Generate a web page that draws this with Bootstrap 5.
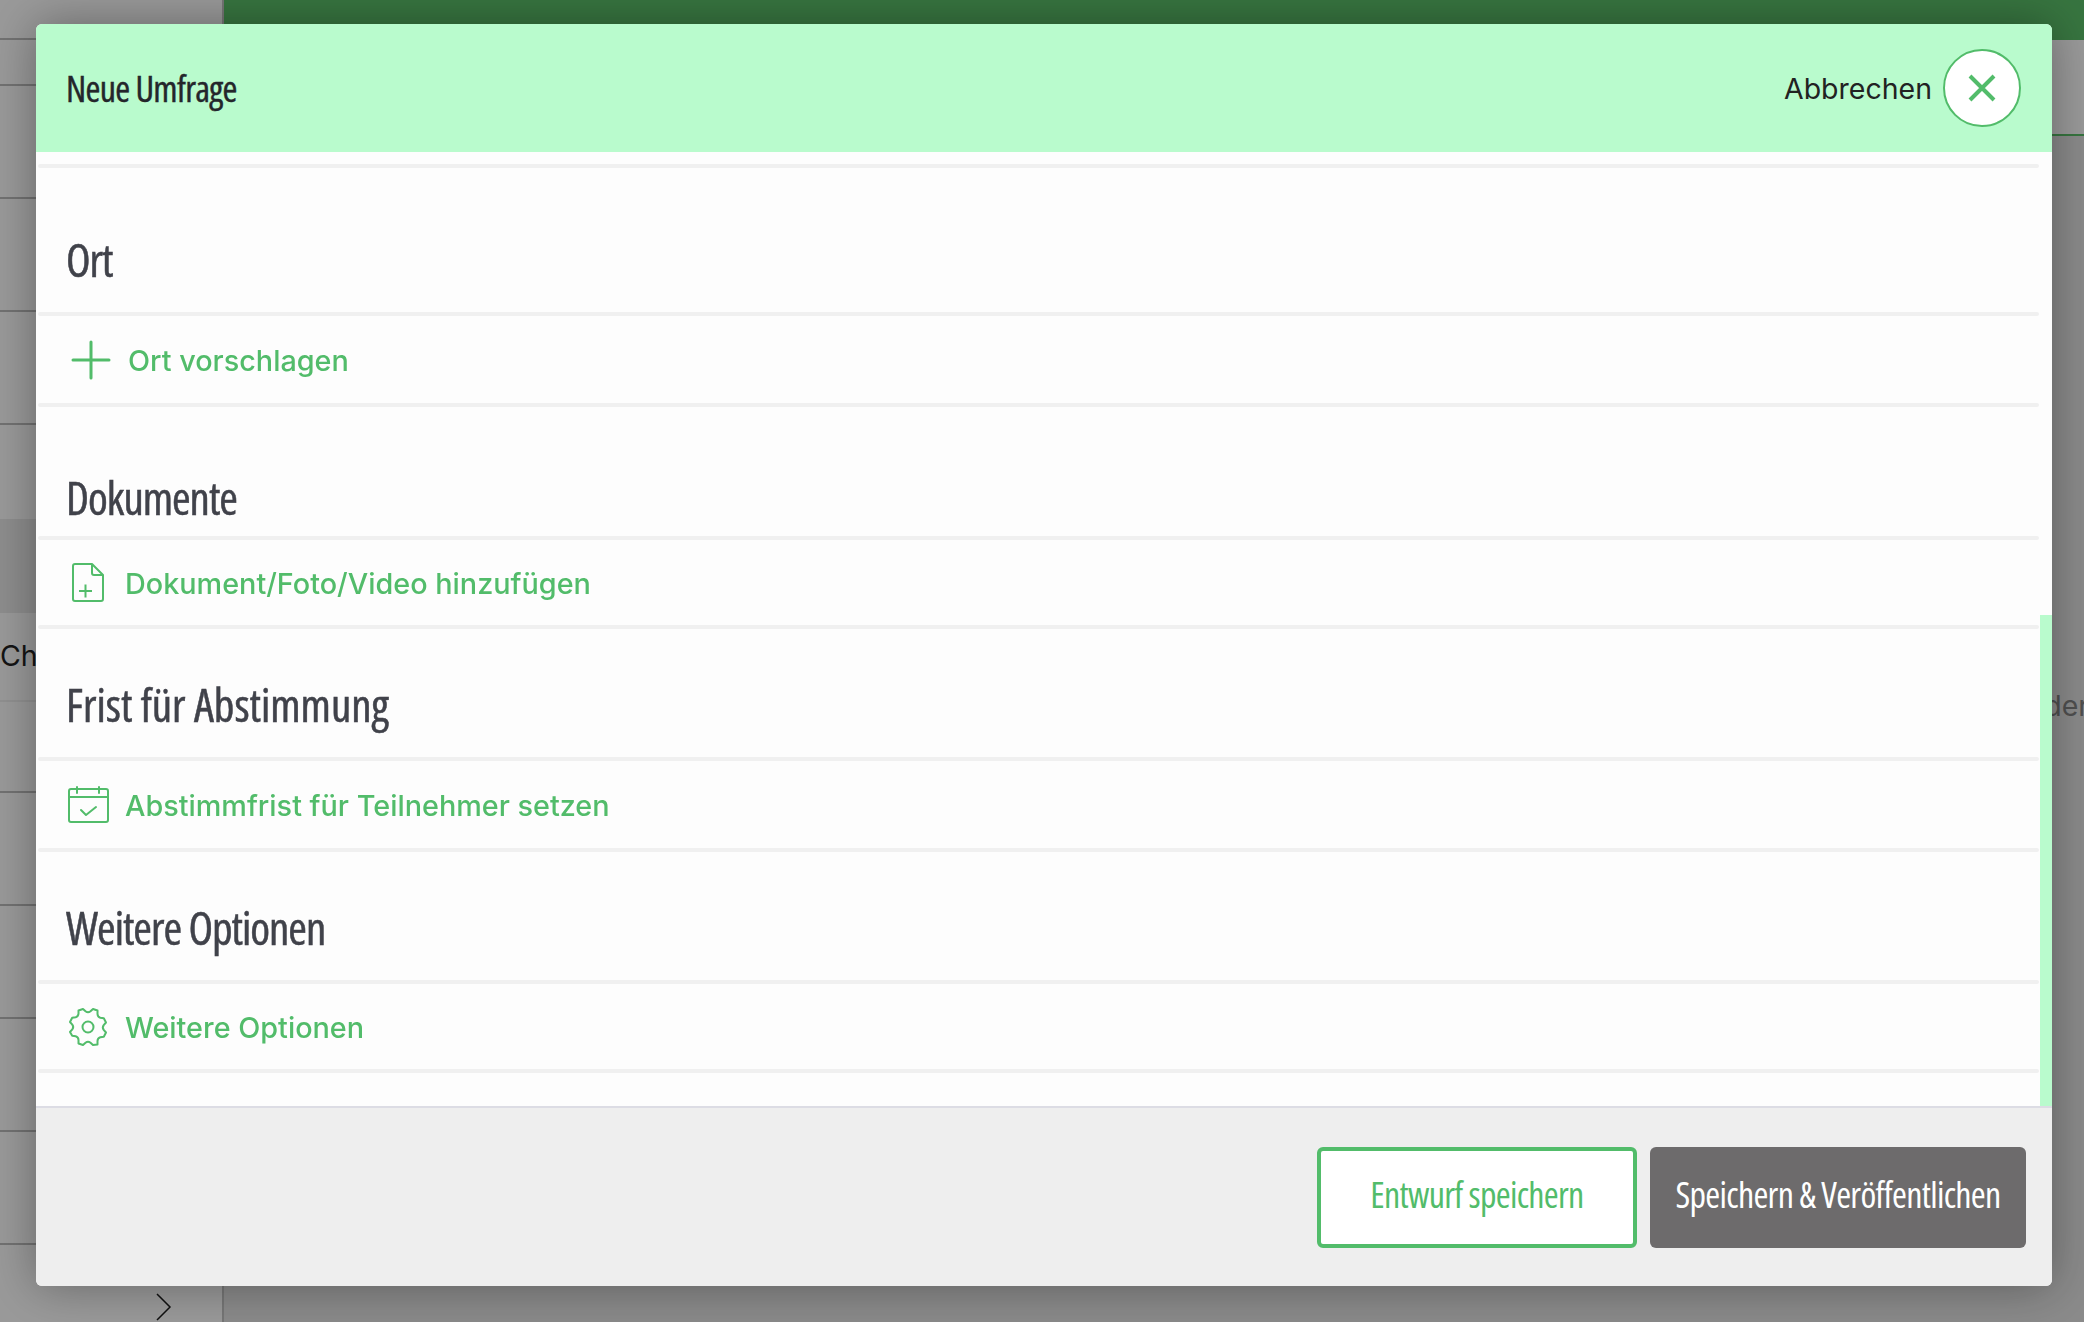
<!DOCTYPE html>
<html lang="de">
<head>
<meta charset="utf-8">
<title>Neue Umfrage</title>
<link href="https://cdn.jsdelivr.net/npm/bootstrap@5.3.0/dist/css/bootstrap.min.css" rel="stylesheet">
<style>
html,body{height:100%;overflow:hidden;}
body{font-family:"Inter","Liberation Sans",sans-serif;font-size:28.5px;color:#222;background:#fff;}
.page-shell{height:1322px;}
.side-col{width:224px;border-right:2px solid #c4c4c4;background:#fff;flex:none;}
.side-row{border-bottom:2px solid #bdbdbd;height:113px;flex:none;white-space:nowrap;overflow:hidden;}
.side-row.r-top{height:40px;}
.side-row.r-a{height:46px;}
.side-row.r-gap{height:94px;border-bottom:0;}
.side-row.r-band{height:94px;background:#eaeaea;border-bottom:0;}
.side-row.r-ch{height:89px;padding-top:26px;border-bottom:2px solid #f0f0f0;line-height:34px;}
.side-row.r-b{height:91px;}
.side-end{flex:1;padding-left:156px;padding-top:48px;}
.main-col{flex:1;overflow:hidden;background:#e6e6e6;}
.main-top{height:40px;background:#5cc26a;}
.main-sub{height:96px;background:#fff;border-bottom:2px solid #5cc26a;}
.main-text{height:570px;padding-top:553px;line-height:34px;margin-right:-5px;white-space:nowrap;color:#848484;}
.scrim{position:fixed;inset:0;background:rgba(0,0,0,.4);padding:24px 32px 36px 36px;}
.sheet{height:100%;border:0;border-radius:6px;overflow:hidden;box-shadow:0 0 48px rgba(0,0,0,.35);background:#fdfdfd;}
.sheet-head{height:128px;background:#b9fbcd;padding:0 31px 0 30px;border:0;border-radius:0;flex:none;}
.narrow{font-family:"Open Sans","Liberation Sans",sans-serif;font-stretch:75%;}
.sheet-title{font-size:36px;font-weight:500;letter-spacing:-.7px;color:#24262b;line-height:1;margin:0;padding-top:1px;-webkit-text-stroke:.4px #24262b;}
.cancel-label{padding-top:3px;}
.close-circle{width:78px;height:78px;border:2px solid #52bc6a;border-radius:50%;background:#fff;margin-left:11px;padding:0;}
.sheet-body{position:relative;background:#fdfdfd;overflow:hidden;padding:12px 13px 0 2px;flex:1;}
.rule-line{height:4px;background:#f0f0f0;border-radius:3px;flex:none;}
.sec-head{padding-left:28px;color:#40424a;font-size:45px;line-height:1;margin:0;height:128px;padding-bottom:30px;font-weight:500;letter-spacing:-1px;-webkit-text-stroke:.5px #40424a;}
.sec-head.h-first{height:144px;}
.sec-head.h-tight{height:129px;padding-bottom:16px;}
.sec-head.h-loose{letter-spacing:0;}
.act-row{height:85px;color:#52bc6a;font-weight:500;font-size:28.8px;padding-left:30px;text-decoration:none;}
.act-row.tall{height:87px;}
.act-row:hover{color:#52bc6a;}
.act-label{padding-top:3px;}
.ico-wrap{width:57px;flex:none;}
.ico-wrap.w-plus{padding-left:3px;width:60px;}
.ico-wrap.w-doc{padding-left:4px;}
.sbar{position:absolute;right:0;top:463px;bottom:0;width:12px;background:#b9fbcd;}
.sheet-foot{height:180px;background:#eeeeee;border-top:2px solid #dcdce4;border-radius:0;padding:39px 26px 0 0;gap:13px;flex:none;align-items:flex-start;justify-content:flex-end;flex-wrap:nowrap;}
.act-btn{height:101px;font-size:36px;line-height:1;border-radius:6px;margin:0;padding:0 0 6px;white-space:nowrap;font-weight:400;letter-spacing:-.7px;}
.btn-draft{width:320px;border:4px solid #52bc6a;background:#fff;color:#52bc6a;}
.btn-pub{width:376px;border:0;background:#6d6b6c;color:#fff;}
</style>
</head>
<body>
<div class="page-shell d-flex">
  <div class="side-col d-flex flex-column">
    <div class="side-row r-top"></div>
    <div class="side-row r-a"></div>
    <div class="side-row"></div>
    <div class="side-row"></div>
    <div class="side-row"></div>
    <div class="side-row r-gap"></div>
    <div class="side-row r-band"></div>
    <div class="side-row r-ch">Chat</div>
    <div class="side-row r-b"></div>
    <div class="side-row"></div>
    <div class="side-row"></div>
    <div class="side-row"></div>
    <div class="side-row"></div>
    <div class="side-end">
      <svg class="d-block" width="16" height="28" viewBox="0 0 16 28" fill="none" stroke="#1d1d1d" stroke-width="1.5"><path d="M1 1l13 13L1 27"/></svg>
    </div>
  </div>
  <div class="main-col d-flex flex-column">
    <div class="main-top"></div>
    <div class="main-sub"></div>
    <div class="main-text text-end">Kalender</div>
  </div>
</div>

<div class="scrim">
  <div class="modal-content sheet d-flex flex-column">
    <div class="modal-header sheet-head d-flex align-items-center justify-content-between">
      <h5 class="modal-title sheet-title narrow">Neue Umfrage</h5>
      <div class="d-flex align-items-center">
        <span class="cancel-label">Abbrechen</span>
        <button type="button" class="close-circle d-flex align-items-center justify-content-center" aria-label="Abbrechen">
          <svg width="30" height="30" viewBox="0 0 30 30" fill="none" stroke="#52bc6a" stroke-width="4"><path d="M3 3l24 24M27 3L3 27"/></svg>
        </button>
      </div>
    </div>
    <div class="modal-body sheet-body d-flex flex-column">
      <div class="rule-line"></div>
      <h4 class="sec-head h-first narrow d-flex align-items-end">Ort</h4>
      <div class="rule-line"></div>
      <a href="#" class="act-row tall d-flex align-items-center">
        <span class="ico-wrap w-plus d-flex">
          <svg width="40" height="40" viewBox="0 0 40 40" fill="none" stroke="#52bc6a" stroke-width="3" stroke-linecap="round"><path d="M20 2v36M2 20h36"/></svg>
        </span><span class="act-label">Ort vorschlagen</span>
      </a>
      <div class="rule-line"></div>
      <h4 class="sec-head h-tight narrow d-flex align-items-end">Dokumente</h4>
      <div class="rule-line"></div>
      <a href="#" class="act-row d-flex align-items-center">
        <span class="ico-wrap w-doc d-flex">
          <svg width="32" height="39" viewBox="0 0 32 39" fill="none" stroke="#52bc6a" stroke-width="2" stroke-linejoin="round"><path d="M3 1h17l11 11v24a2 2 0 0 1-2 2H3a2 2 0 0 1-2-2V3a2 2 0 0 1 2-2z"/><path d="M20 1v9a2 2 0 0 0 2 2h9"/><path d="M7 28h13M13.500 21.500v13"/></svg>
        </span><span class="act-label">Dokument/Foto/Video hinzufügen</span>
      </a>
      <div class="rule-line"></div>
      <h4 class="sec-head h-loose narrow d-flex align-items-end">Frist für Abstimmung</h4>
      <div class="rule-line"></div>
      <a href="#" class="act-row tall d-flex align-items-center">
        <span class="ico-wrap d-flex">
          <svg width="41" height="37" viewBox="0 0 41 37" fill="none" stroke="#52bc6a" stroke-width="2" stroke-linejoin="round" stroke-linecap="round"><rect x="1" y="3" width="39" height="33" rx="2"/><path d="M1 11h39M9 1v6M31 1v6M13 24l5 5 10-8"/></svg>
        </span><span class="act-label">Abstimmfrist für Teilnehmer setzen</span>
      </a>
      <div class="rule-line"></div>
      <h4 class="sec-head narrow d-flex align-items-end">Weitere Optionen</h4>
      <div class="rule-line"></div>
      <a href="#" class="act-row d-flex align-items-center">
        <span class="ico-wrap d-flex">
          <svg width="40" height="40" viewBox="0 0 40 40" fill="none" stroke="#52bc6a" stroke-width="2" stroke-linejoin="round"><circle cx="20" cy="20" r="5.500"/><path d="M15 2l2.500 2.300a4 4 0 0 0 5 0L25 2l4.500 1.500 0 3.500a4 4 0 0 0 2.800 3.700l3.500.5 2.200 4.300-2.300 2.600a4 4 0 0 0 0 4.800l2.300 2.600-2.200 4.300-3.500.5a4 4 0 0 0-2.800 3.700l0 3.500L25 38l-2.500-2.300a4 4 0 0 0-5 0L15 38l-4.500-1.500 0-3.500a4 4 0 0 0-2.800-3.700l-3.500-.5L2 25l2.300-2.600a4 4 0 0 0 0-4.800L2 15l2.200-4.300 3.500-.5A4 4 0 0 0 10.500 6.500l0-3z"/></svg>
        </span><span class="act-label">Weitere Optionen</span>
      </a>
      <div class="rule-line"></div>
      <div class="sbar"></div>
    </div>
    <div class="modal-footer sheet-foot d-flex">
      <button type="button" class="btn act-btn btn-draft narrow">Entwurf speichern</button>
      <button type="button" class="btn act-btn btn-pub narrow">Speichern &amp; Veröffentlichen</button>
    </div>
  </div>
</div>
<script src="https://cdn.jsdelivr.net/npm/bootstrap@5.3.0/dist/js/bootstrap.bundle.min.js"></script>
</body>
</html>
